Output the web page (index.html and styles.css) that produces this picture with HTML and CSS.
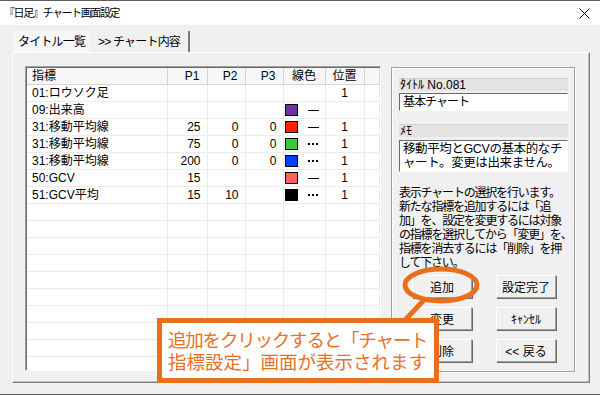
FILE: index.html
```html
<!DOCTYPE html>
<html lang="ja">
<head>
    <meta charset="UTF-8">
    <title>『日足』チャート画面設定</title>
    <link rel="stylesheet" href="styles.css">
</head>
<body>
    <div class="window">
        <div class="titlebar">
            <span class="title">『日足』チャート画面設定</span>
            <svg class="close" width="11" height="11" viewBox="0 0 11 11">
                <path d="M0.5 0.5 L10.5 10.5 M10.5 0.5 L0.5 10.5" stroke="#000" stroke-width="1"/>
            </svg>
        </div>
        <div class="content">
            <div class="tabs">
                <div class="tab">タイトル一覧</div>
                <div class="tab active">&gt;&gt; チャート内容</div>
            </div>
            <div class="panel">
                <div class="list">
                    <table>
                        <colgroup>
                            <col class="c-name"><col class="c-p"><col class="c-p2"><col class="c-p2"><col class="c-color"><col class="c-pos"><col>
                        </colgroup>
                        <thead>
                            <tr>
                                <th class="left">指標</th>
                                <th class="num">P1</th>
                                <th class="num">P2</th>
                                <th class="num">P3</th>
                                <th>線色</th>
                                <th>位置</th>
                                <th></th>
                            </tr>
                        </thead>
                        <tbody>
                            <tr><td class="left">01:ロウソク足</td><td></td><td></td><td></td><td></td><td class="pos">1</td><td></td></tr>
                            <tr><td class="left">09:出来高</td><td></td><td></td><td></td><td class="color"><span class="swatch purple"></span><span class="solid"></span></td><td></td><td></td></tr>
                            <tr><td class="left">31:移動平均線</td><td class="num">25</td><td class="num">0</td><td class="num">0</td><td class="color"><span class="swatch red"></span><span class="solid"></span></td><td class="pos">1</td><td></td></tr>
                            <tr><td class="left">31:移動平均線</td><td class="num">75</td><td class="num">0</td><td class="num">0</td><td class="color"><span class="swatch green"></span><span class="dotted"></span></td><td class="pos">1</td><td></td></tr>
                            <tr><td class="left">31:移動平均線</td><td class="num">200</td><td class="num">0</td><td class="num">0</td><td class="color"><span class="swatch blue"></span><span class="dotted"></span></td><td class="pos">1</td><td></td></tr>
                            <tr><td class="left">50:GCV</td><td class="num">15</td><td></td><td></td><td class="color"><span class="swatch pink"></span><span class="solid"></span></td><td class="pos">1</td><td></td></tr>
                            <tr><td class="left">51:GCV平均</td><td class="num">15</td><td class="num">10</td><td></td><td class="color"><span class="swatch black"></span><span class="dotted"></span></td><td class="pos">1</td><td></td></tr>
                            <tr><td></td><td></td><td></td><td></td><td></td><td></td><td></td></tr>
                            <tr><td></td><td></td><td></td><td></td><td></td><td></td><td></td></tr>
                            <tr><td></td><td></td><td></td><td></td><td></td><td></td><td></td></tr>
                            <tr><td></td><td></td><td></td><td></td><td></td><td></td><td></td></tr>
                            <tr><td></td><td></td><td></td><td></td><td></td><td></td><td></td></tr>
                            <tr><td></td><td></td><td></td><td></td><td></td><td></td><td></td></tr>
                            <tr><td></td><td></td><td></td><td></td><td></td><td></td><td></td></tr>
                            <tr><td></td><td></td><td></td><td></td><td></td><td></td><td></td></tr>
                            <tr><td></td><td></td><td></td><td></td><td></td><td></td><td></td></tr>
                            <tr><td></td><td></td><td></td><td></td><td></td><td></td><td></td></tr>
                            <tr><td></td><td></td><td></td><td></td><td></td><td></td><td></td></tr>
                        </tbody>
                    </table>
                </div>
                <div class="group">
                    <div class="field-label">ﾀｲﾄﾙ No.081</div>
                    <div class="textbox">基本チャート</div>
                    <div class="field-label memo-label">ﾒﾓ</div>
                    <div class="textbox memo">移動平均とGCVの基本的なチ<br>ャート。変更は出来ません。</div>
                    <p class="help">表示チャートの選択を行います。<br>新たな指標を追加するには「追<br>加」を、設定を変更するには対象<br>の指標を選択してから「変更」を、<br>指標を消去するには「削除」を押<br>して下さい。</p>
                    <div class="buttons">
                        <button>追加</button>
                        <button>設定完了</button>
                        <button>変更</button>
                        <button>ｷｬﾝｾﾙ</button>
                        <button>削除</button>
                        <button>&lt;&lt; 戻る</button>
                    </div>
                </div>
            </div>
        </div>

        <!-- annotation -->
        <svg class="marks" width="600" height="395" viewBox="0 0 600 395">
            <path d="M425 298 L405 319" stroke="#ea6f1d" stroke-width="5" fill="none"/>
            <ellipse cx="441" cy="284" rx="36" ry="16" stroke="#ea6f1d" stroke-width="5" fill="none"/>
        </svg>
        <div class="callout"><span class="tight">追加をクリックすると「チャート</span><br>指標設定」画面が表示されます</div>
    </div>
</body>
</html>
```

FILE: styles.css
```css
body {
    margin: 0;
    padding: 0;
    background-color: #fff;
}
.window {
    position: relative;
    width: 600px;
    height: 395px;
    box-sizing: border-box;
    background-color: #f0f0f0;
    border-top: 1px solid #5f5f5f;
    border-bottom: 1px solid #5f5f5f;
    overflow: hidden;
    font-family: "Liberation Sans", "Noto Sans CJK JP", sans-serif;
    font-size: 12px;
    color: #000;
}
.titlebar {
    height: 24px;
    background-color: #fff;
    display: flex;
    align-items: center;
    justify-content: space-between;
    padding: 0 10px 0 4px;
}
.title {
    font-size: 11px;
    letter-spacing: -1.4px;
    line-height: 14px;
}
.content {
    padding: 6px 10px 0 12px;
}
.tabs {
    display: flex;
    height: 21px;
    padding-left: 1px;
}
.tab {
    display: flex;
    align-items: center;
    padding: 0 5px;
    line-height: 14px;
    letter-spacing: -0.8px;
    white-space: nowrap;
}
.tab:first-child {
    width: 67px;
    background-color: #f6f6f6;
}
.tab.active {
    width: 85px;
    padding-left: 8px;
    border-right: 2px solid #7a7a7a;
}
.panel {
    width: 578px;
    height: 331px;
    box-sizing: border-box;
    border: 1px solid;
    border-color: #fff #7a7a7a #7a7a7a #fff;
    box-shadow: inset -1px -1px 0 #c0c0c0;
    padding: 13px 0 0 12px;
    display: flex;
    gap: 10px;
    align-items: flex-start;
}
.list {
    width: 356px;
    height: 305px;
    box-sizing: border-box;
    border: 1px solid;
    border-color: #a0a0a0 #fff #fff #a0a0a0;
    box-shadow: inset 1px 1px 0 #696969;
    background-color: #fff;
    padding: 1px 0 0 1px;
    overflow: hidden;
}
table {
    width: 100%;
    table-layout: fixed;
    border-collapse: collapse;
}
.c-name { width: 140px; }
.c-p { width: 40px; }
.c-p2 { width: 38px; }
.c-color { width: 42px; }
.c-pos { width: 39px; }
th {
    height: 16px;
    padding: 0;
    font-weight: normal;
    line-height: 15px;
    background-color: #f7f7f7;
    border-right: 1px solid #d5d5d5;
    border-bottom: 1px solid #d5d5d5;
    text-align: center;
}
td {
    height: 16px;
    padding: 0;
    line-height: 15px;
    border-right: 1px solid #ececec;
    border-bottom: 1px solid #ececec;
    white-space: nowrap;
}
.left {
    text-align: left;
    padding-left: 5px;
}
th.num {
    text-align: right;
    padding-right: 7px;
}
td.num {
    text-align: right;
    padding-right: 6px;
}
.pos {
    text-align: center;
}
.color {
    padding-left: 1px;
}
.swatch {
    display: inline-block;
    width: 11px;
    height: 10px;
    border: 1px solid #000;
    vertical-align: middle;
}
.purple { background-color: #7030a0; }
.red { background-color: #ff2000; }
.green { background-color: #38c838; }
.blue { background-color: #0040ff; }
.pink { background-color: #ff6060; }
.black { background-color: #000; }
.solid,
.dotted {
    display: inline-block;
    width: 11px;
    margin-left: 10px;
    vertical-align: middle;
}
.solid {
    border-top: 1px solid #000;
}
.dotted {
    width: 10px;
    border-top: 2px dotted #000;
}
.group {
    margin-top: 1px;
    width: 184px;
    height: 305px;
    box-sizing: border-box;
    border: 1px solid #a0a0a0;
    box-shadow: 1px 1px 0 #fff, inset 1px 1px 0 #fff;
    padding: 10px 6px 0 7px;
}
.field-label {
    height: 12px;
    line-height: 12px;
    background-color: #e3e3e3;
    border-top: 1px solid #d0d0d0;
    padding-left: 1px;
}
.textbox {
    margin-top: 2px;
    height: 18px;
    box-sizing: border-box;
    background-color: #fff;
    border: 1px solid;
    border-color: #696969 #fff #fff #696969;
    padding-left: 3px;
    line-height: 16px;
    letter-spacing: -1px;
    white-space: nowrap;
}
.memo-label {
    margin-top: 13px;
}
.memo {
    margin-top: 3px;
    height: 32px;
    line-height: 14px;
    padding: 1px 3px;
    font-size: 12.5px;
    letter-spacing: -0.4px;
    overflow: hidden;
}
.help {
    margin: 14px 0 0 0;
    line-height: 14px;
    letter-spacing: -1.2px;
    white-space: nowrap;
}
.buttons {
    display: grid;
    grid-template-columns: 60px 60px;
    column-gap: 24px;
    row-gap: 9px;
    margin: 5px 0 0 13px;
}
button {
    height: 23px;
    padding: 0;
    font-family: "Liberation Sans", "Noto Sans CJK JP", sans-serif;
    font-size: 12px;
    background-color: #f0f0f0;
    border: 1px solid;
    border-color: #fff #a0a0a0 #a0a0a0 #fff;
    box-shadow: 1px 1px 0 #696969;
    color: #000;
}
.marks {
    position: absolute;
    left: 0;
    top: 0;
    pointer-events: none;
}
.callout {
    position: absolute;
    left: 157px;
    top: 317px;
    width: 266px;
    height: 50px;
    border: 5px solid #ea6f1d;
    background-color: #fff;
    padding: 5px 0 0 6px;
    font-family: "Noto Sans CJK JP", sans-serif;
    font-size: 18.5px;
    line-height: 22px;
    color: #e8701f;
    white-space: nowrap;
}
.tight {
    letter-spacing: -1.2px;
}
```
